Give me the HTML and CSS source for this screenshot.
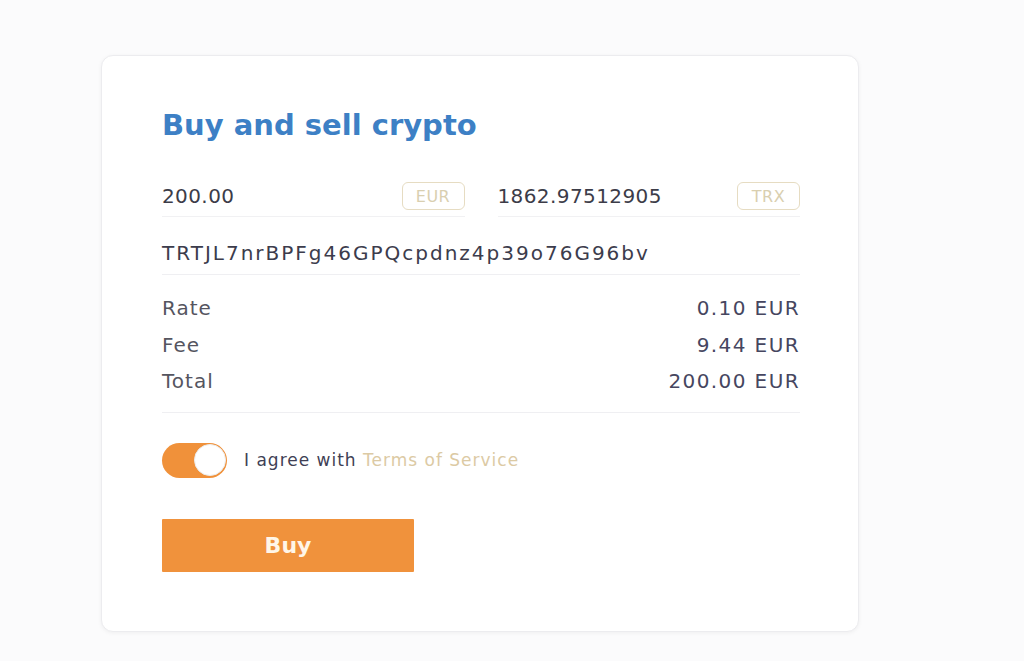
FILE: index.html
```html
<!DOCTYPE html>
<html lang="en">
<head>
<meta charset="utf-8">
<title>Buy and sell crypto</title>
<link rel="stylesheet" href="styles.css">
</head>
<body>
<main class="card">
  <h1 class="title">Buy and sell crypto</h1>
  <div class="pair">
    <div class="field">
      <span class="value">200.00</span>
      <span class="badge">EUR</span>
    </div>
    <div class="field">
      <span class="value">1862.97512905</span>
      <span class="badge">TRX</span>
    </div>
  </div>
  <div class="address">TRTJL7nrBPFg46GPQcpdnz4p39o76G96bv</div>
  <div class="details">
    <div class="drow"><span class="label">Rate</span><span class="amount">0.10 EUR</span></div>
    <div class="drow"><span class="label">Fee</span><span class="amount">9.44 EUR</span></div>
    <div class="drow"><span class="label">Total</span><span class="amount">200.00 EUR</span></div>
  </div>
  <div class="agree">
    <span class="toggle"><span class="knob"></span></span>
    <span class="agree-text">I agree with <span class="terms">Terms of Service</span></span>
  </div>
  <button class="buy" type="button">Buy</button>
</main>
</body>
</html>
```
FILE: styles.css
```css
html, body {
  margin: 0;
  padding: 0;
}
body {
  background: #fbfbfc;
  font-family: "DejaVu Sans", "Noto Sans", sans-serif;
  color: #3d3d4e;
  width: 1024px;
  height: 661px;
  overflow: hidden;
  padding-top: 55px;
  box-sizing: border-box;
}
.card {
  margin-left: 101px;
  width: 758px;
  height: 577px;
  box-sizing: border-box;
  background: #ffffff;
  border: 1px solid #ececef;
  border-radius: 12px;
  box-shadow: 0 1px 4px rgba(0, 0, 0, 0.05);
  padding: 52px 58px 0 60px;
  display: flex;
  flex-direction: column;
}
.title {
  margin: 0;
  font-size: 29px;
  line-height: 34px;
  font-weight: 700;
  color: #3d80c5;
}
.pair {
  margin-top: 34px;
  display: flex;
  gap: 33px;
}
.field {
  flex: 1;
  height: 40px;
  display: flex;
  align-items: center;
  justify-content: space-between;
  border-bottom: 1px solid #f1f1f3;
}
.value {
  font-size: 20px;
  letter-spacing: 0.4px;
  color: #3c3c48;
}
.badge {
  width: 63px;
  height: 28px;
  box-sizing: border-box;
  border: 1.5px solid #e6dcc2;
  border-radius: 6px;
  display: flex;
  align-items: center;
  justify-content: center;
  font-size: 16px;
  letter-spacing: 0.5px;
  color: #d9cfb0;
}
.address {
  height: 58px;
  box-sizing: border-box;
  padding-bottom: 10px;
  display: flex;
  align-items: flex-end;
  font-size: 20px;
  letter-spacing: 2px;
  line-height: 22px;
  color: #3c3c4c;
  border-bottom: 1px solid #efeff2;
}
.details {
  padding: 15px 0 12px;
  border-bottom: 1px solid #efeff2;
}
.drow {
  height: 36.5px;
  display: flex;
  align-items: center;
  justify-content: space-between;
  font-size: 20px;
  letter-spacing: 1px;
}
.label {
  color: #55555f;
}
.amount {
  color: #464660;
  letter-spacing: 1.4px;
}
.agree {
  margin-top: 30px;
  display: flex;
  align-items: center;
  gap: 17px;
}
.toggle {
  width: 65px;
  height: 35px;
  border-radius: 18px;
  background: #f0913a;
  display: flex;
  align-items: center;
  justify-content: flex-end;
  padding: 0 1px;
  box-sizing: border-box;
}
.knob {
  width: 32px;
  height: 32px;
  border-radius: 50%;
  background: #ffffff;
  border: 1px solid #ececec;
  box-sizing: border-box;
}
.agree-text {
  font-size: 17px;
  letter-spacing: 1px;
  color: #3f3f55;
}
.terms {
  color: #dccaa4;
}
.buy {
  margin-top: 41px;
  width: 252px;
  height: 53px;
  border: none;
  border-radius: 1px;
  background: #f0923c;
  color: #fff6e8;
  font-family: inherit;
  font-size: 22px;
  font-weight: 700;
  padding: 0;
  cursor: pointer;
}
```
